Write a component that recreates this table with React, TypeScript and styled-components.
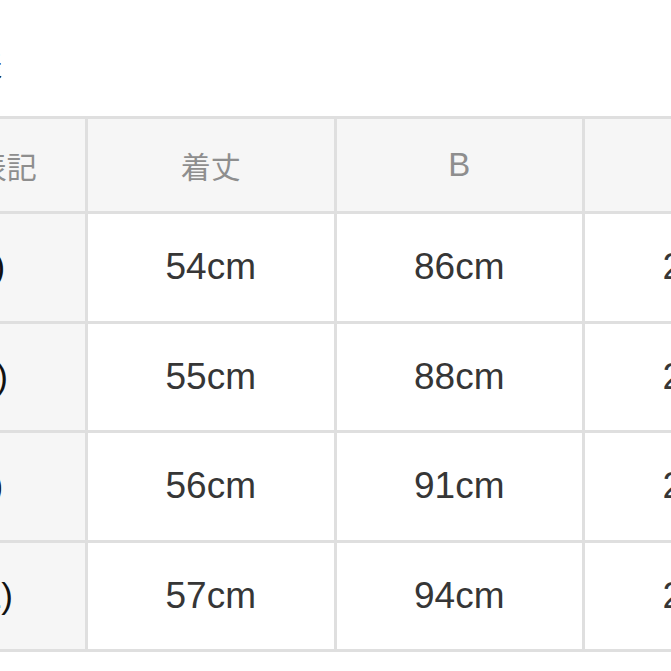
import React from "react";
import styled, { createGlobalStyle } from "styled-components";

const Global = createGlobalStyle`
  html, body {
    margin: 0;
    padding: 0;
    background: #ffffff;
    overflow: hidden;
  }
  body {
    font-family: "Liberation Sans", "Noto Sans CJK JP", sans-serif;
  }
`;

const Page = styled.div`
  width: 671px;
  height: 671px;
  overflow: hidden;
  background: #ffffff;
`;

const Sheet = styled.div`
  margin-left: -163.5px;
  padding-top: 50px;
  display: flex;
  flex-direction: column;
  gap: 38px;
`;

const Title = styled.h2`
  margin: 0;
  padding-left: 54.5px;
  height: 28px;
  line-height: 28px;
  font-size: 28px;
  font-weight: 400;
  color: #111111;
  font-family: "Noto Sans CJK JP", "Liberation Sans", sans-serif;
  white-space: nowrap;
`;

const Grid = styled.div`
  display: grid;
  grid-template-columns: repeat(4, 245.5px);
  grid-template-rows: 92px repeat(4, 106.5px);
  gap: 3px;
  padding: 3px;
  background: #dfdfdf;
  width: max-content;
`;

const HeadCell = styled.div<{ $latin?: boolean }>`
  background: #f6f6f6;
  display: flex;
  align-items: center;
  justify-content: center;
  font-family: "Liberation Sans", "Noto Sans CJK JP", sans-serif;
  font-size: ${(p) => (p.$latin ? "33px" : "30px")};
  color: #8e8e8e;
  white-space: nowrap;
`;

const LabelCell = styled.div`
  background: #f6f6f6;
  display: flex;
  align-items: center;
  justify-content: center;
  font-size: 35px;
  color: #111111;
  white-space: nowrap;
`;

const ValueCell = styled.div`
  background: #ffffff;
  display: flex;
  align-items: center;
  justify-content: center;
  font-size: 37px;
  color: #363636;
  white-space: nowrap;
`;

const headers = [
  { text: "サイズ表記", latin: false },
  { text: "着丈", latin: false },
  { text: "B", latin: true },
  { text: "袖丈", latin: false },
];
const rows = [
  { label: "36(S)", values: ["54cm", "86cm", "20cm"] },
  { label: "38(M)", values: ["55cm", "88cm", "21cm"] },
  { label: "40(L)", values: ["56cm", "91cm", "22cm"] },
  { label: "42(LL)", values: ["57cm", "94cm", "23cm"] },
];

export default function App() {
  return (
    <Page>
      <Global />
      <Sheet>
        <Title>サイズ表</Title>
        <Grid>
          {headers.map((h) => (
            <HeadCell key={h.text} $latin={h.latin}>
              {h.text}
            </HeadCell>
          ))}
          {rows.map((r) => (
            <React.Fragment key={r.label}>
              <LabelCell>{r.label}</LabelCell>
              {r.values.map((v, i) => (
                <ValueCell key={i}>{v}</ValueCell>
              ))}
            </React.Fragment>
          ))}
        </Grid>
      </Sheet>
    </Page>
  );
}
